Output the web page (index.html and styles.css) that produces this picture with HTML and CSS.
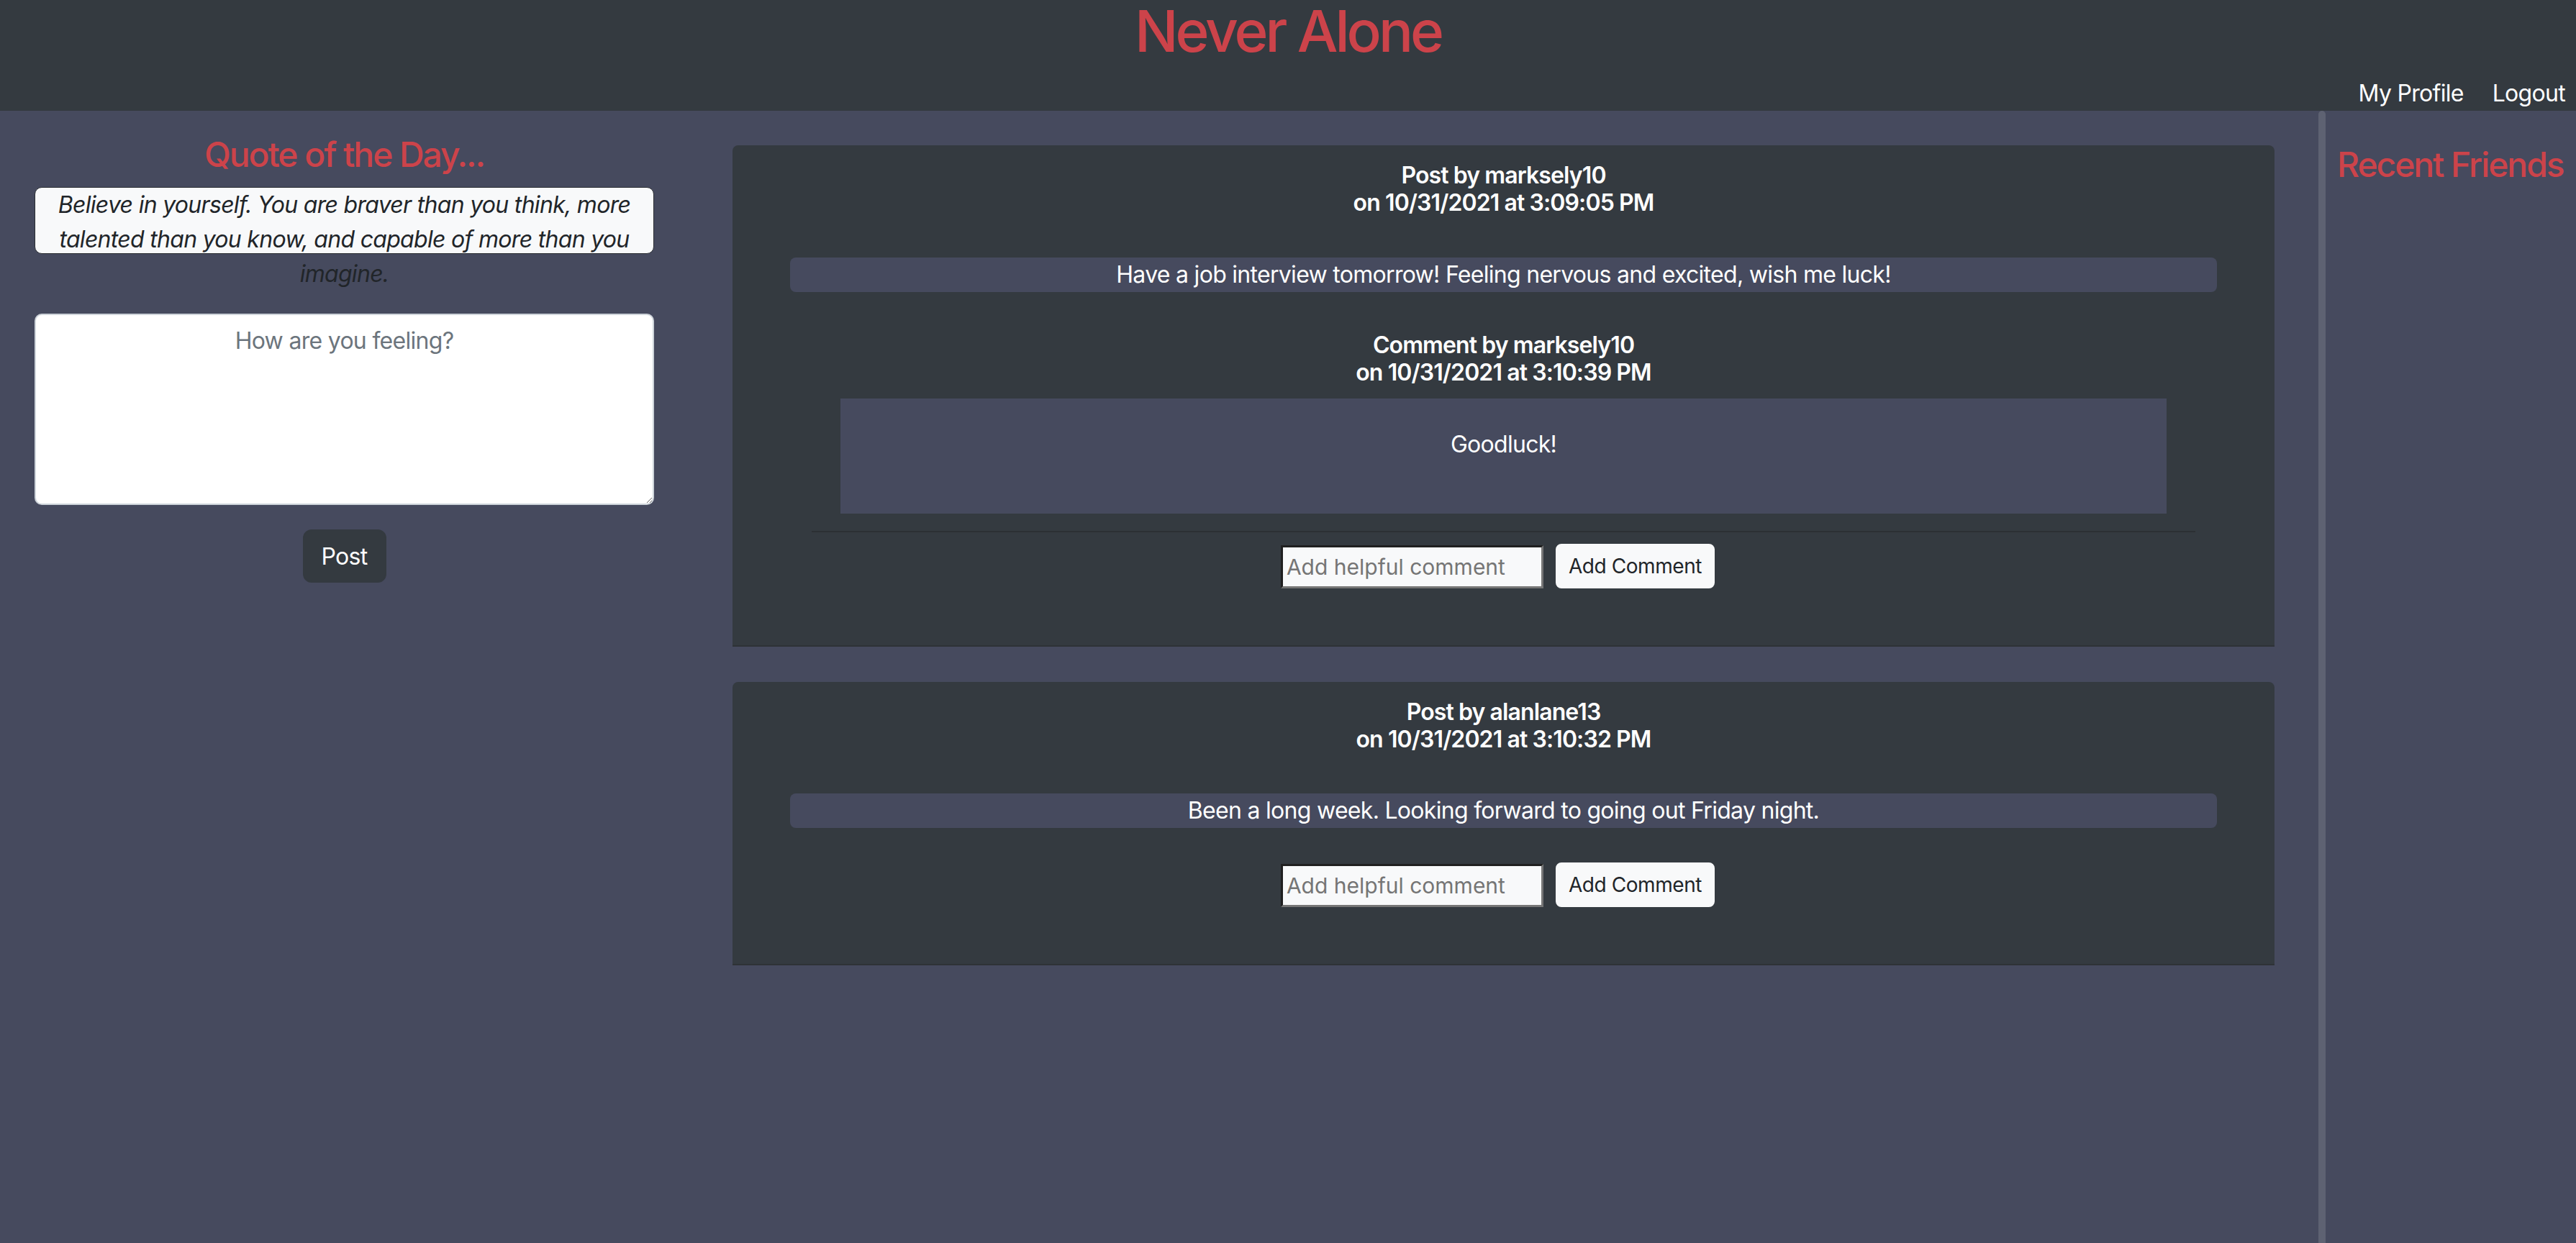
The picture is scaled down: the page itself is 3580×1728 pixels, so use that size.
FILE: index.html
```html
<!DOCTYPE html>
<html lang="en">
<head>
<meta charset="utf-8">
<title>Never Alone</title>
<link rel="stylesheet" href="styles.css">
</head>
<body>
<header class="topbar">
  <h1 class="brand">Never Alone</h1>
  <nav class="topnav">
    <a href="#" class="navlink">My Profile</a>
    <a href="#" class="navlink">Logout</a>
  </nav>
</header>
<main class="layout">
  <aside class="left-col">
    <h4 class="section-title">Quote of the Day...</h4>
    <div class="quote">Believe in yourself. You are braver than you think, more talented than you know, and capable of more than you imagine.</div>
    <form class="new-post">
      <textarea class="feeling" placeholder="How are you feeling?"></textarea>
      <button type="button" class="btn-post">Post</button>
    </form>
  </aside>

  <section class="feed">
    <article class="post">
      <h6 class="meta">Post by marksely10<br>on 10/31/2021 at 3:09:05 PM</h6>
      <div class="post-body">Have a job interview tomorrow! Feeling nervous and excited, wish me luck!</div>
      <div class="comments">
        <h6 class="meta comment-meta">Comment by marksely10<br>on 10/31/2021 at 3:10:39 PM</h6>
        <div class="comment-box"><p class="comment-text">Goodluck!</p></div>
        <hr class="rule">
      </div>
      <form class="comment-form">
        <input type="text" class="comment-input" placeholder="Add helpful comment">
        <button type="button" class="btn-comment">Add Comment</button>
      </form>
    </article>

    <article class="post">
      <h6 class="meta">Post by alanlane13<br>on 10/31/2021 at 3:10:32 PM</h6>
      <div class="post-body">Been a long week. Looking forward to going out Friday night.</div>
      <form class="comment-form">
        <input type="text" class="comment-input" placeholder="Add helpful comment">
        <button type="button" class="btn-comment">Add Comment</button>
      </form>
    </article>
  </section>

  <div class="vr"></div>

  <aside class="right-col">
    <h4 class="friends-title">Recent Friends</h4>
  </aside>
</main>
</body>
</html>
```
FILE: styles.css
```css
* { box-sizing: border-box; }

html, body {
  margin: 0;
  padding: 0;
}

body {
  font-family: "Inter", "Noto Sans", sans-serif;
  font-size: 32px;
  line-height: 48px;
  letter-spacing: -0.022em;
  color: #ffffff;
  background: #464a5e;
  min-height: 100vh;
  display: flex;
  flex-direction: column;
}

/* ---------- header ---------- */
.topbar {
  background: #343a40;
  height: 154px;
  display: flex;
  flex-direction: column;
}

.brand {
  margin: 0;
  text-align: center;
  font-size: 80px;
  line-height: 86px;
  font-weight: 500;
  letter-spacing: -0.05em;
  color: #cc434a;
}

.topnav {
  margin-top: 20px;
  display: flex;
  justify-content: flex-end;
  gap: 40px;
  padding-right: 15px;
  line-height: 48px;
}

.navlink {
  color: #ffffff;
  text-decoration: none;
  font-size: 32px;
}

/* ---------- layout ---------- */
.layout {
  flex: 1;
  display: flex;
  align-items: stretch;
}

.left-col {
  width: 957px;
  flex: none;
  padding: 0 48px;
  display: flex;
  flex-direction: column;
  align-items: center;
}

.section-title {
  margin: 32px 0 16px;
  font-size: 48px;
  line-height: 57.6px;
  font-weight: 500;
  letter-spacing: -0.043em;
  color: #cc434a;
  text-align: center;
}

.quote {
  width: 100%;
  height: 93px;
  border: 1px solid #2b2e33;
  border-radius: 10px;
  background: #f8f9fa;
  color: #212529;
  font-style: italic;
  font-size: 32px;
  line-height: 48px;
  text-align: center;
}

.new-post {
  width: 100%;
  margin-top: 83px;
  display: flex;
  flex-direction: column;
  align-items: center;
}

.feeling {
  width: 100%;
  height: 266px;
  padding: 12px 24px;
  border: 2px solid #ced4da;
  border-radius: 10px;
  background: #ffffff;
  font-family: inherit;
  font-size: 32px;
  line-height: 48px;
  letter-spacing: -0.022em;
  text-align: center;
  color: #212529;
}

.feeling::placeholder { color: #6c757d; }

.btn-post {
  margin-top: 34px;
  height: 74px;
  padding: 12px 24px;
  border: 2px solid #343a40;
  border-radius: 12px;
  background: #343a40;
  color: #ffffff;
  font-family: inherit;
  font-size: 32px;
  line-height: 48px;
  letter-spacing: -0.022em;
}

/* ---------- feed ---------- */
.feed {
  flex: 1;
  padding: 48px 61px 0;
  display: flex;
  flex-direction: column;
  gap: 49px;
}

.post {
  background: #343a40;
  border-radius: 8px 8px 0 0;
  border-bottom: 2px solid #2e3236;
  padding: 23px 0 79px;
  text-align: center;
}

.meta {
  margin: 0 0 56px;
  font-size: 32px;
  line-height: 38.4px;
  font-weight: 600;
  letter-spacing: -0.028em;
}

.post-body {
  margin: 0 80px 48px;
  background: #464a5e;
  border-radius: 8px;
  line-height: 48px;
}

.comments {
  padding-top: 7px;
}

.comment-meta {
  margin-bottom: 16px;
}

.comment-box {
  margin: 0 150px;
  padding: 40px;
  background: #464a5e;
}

.comment-text {
  margin: 0 0 32px;
}

.rule {
  margin: 24px 110px 16px;
  height: 2px;
  border: 0;
  background: #2c3034;
}

.comment-form {
  display: flex;
  justify-content: center;
  align-items: flex-end;
  gap: 17px;
  padding-right: 16px;
}

.comment-input {
  width: 365px;
  height: 60px;
  padding: 0 5px;
  border-style: solid;
  border-width: 3px;
  border-color: #202020 #767676 #767676 #202020;
  background: #f8f9fa;
  font-family: inherit;
  font-size: 30px;
  color: #212529;
}

.comment-input::placeholder { color: #757575; }

.btn-comment {
  height: 62px;
  padding: 8px 16px;
  border: 2px solid #f8f9fa;
  border-radius: 8px;
  background: #f8f9fa;
  color: #212529;
  font-family: inherit;
  font-size: 28px;
  line-height: 42px;
  letter-spacing: -0.015em;
}

/* ---------- divider & right column ---------- */
.vr {
  width: 10px;
  flex: none;
  background: #5e6272;
  border-radius: 5px 5px 0 0;
}

.right-col {
  width: 348px;
  flex: none;
  padding-left: 16px;
}

.friends-title {
  margin: 46px 0 0;
  font-size: 48px;
  line-height: 57.6px;
  font-weight: 500;
  letter-spacing: -0.043em;
  color: #cc434a;
  white-space: nowrap;
}
```
